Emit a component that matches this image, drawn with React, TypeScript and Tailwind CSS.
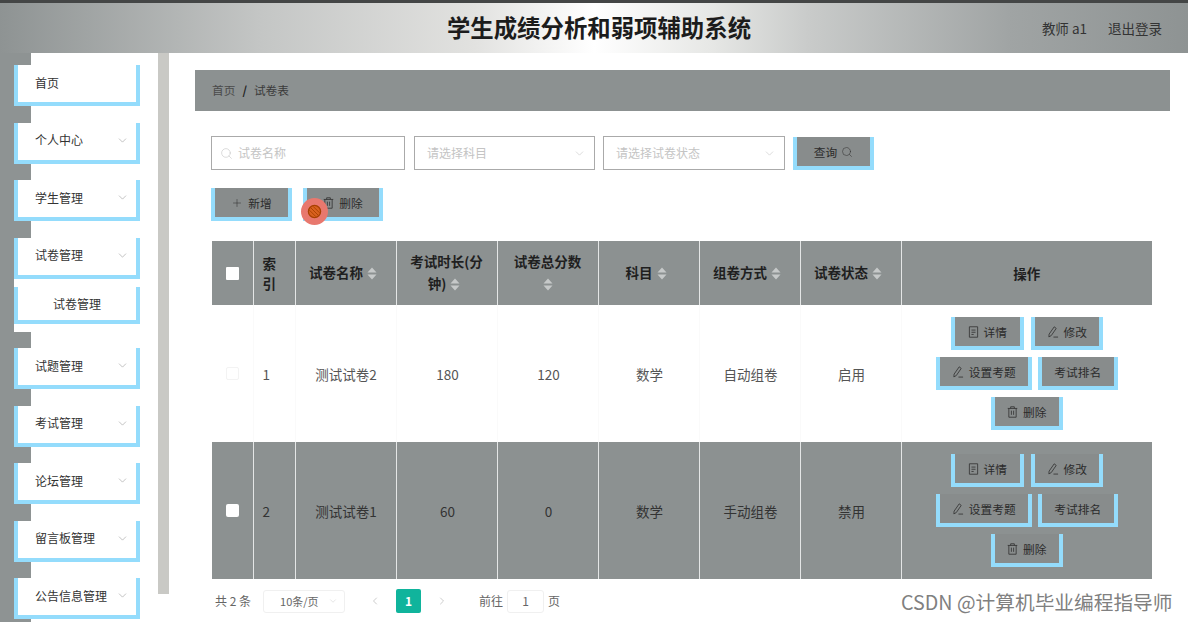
import React from 'react';
import { ChevronDown, ChevronLeft, ChevronRight, Plus, Search } from 'lucide-react';

const menu = ['首页', '个人中心', '学生管理', '试卷管理', '试题管理', '考试管理', '论坛管理', '留言板管理', '公告信息管理'];

const rows = [
  { id: 1, name: '测试试卷2', time: '180', score: '120', subject: '数学', mode: '自动组卷', status: '启用' },
  { id: 2, name: '测试试卷1', time: '60', score: '0', subject: '数学', mode: '手动组卷', status: '禁用' },
];

function SortIcon() {
  return (
    <svg viewBox="0 0 10 13" className="inline-block w-[10px] h-[13px] ml-[4px] mr-[5px] align-[-2px]">
      <path d="M5 0.5 L9.5 5.5 H0.5 Z M5 12.5 L0.5 7.5 H9.5 Z" fill="#c6c9c9" />
    </svg>
  );
}

function TrashIcon() {
  return (
    <svg viewBox="0 0 12 13" fill="none" stroke="#333" strokeWidth="0.9" className="w-[11px] h-[12px]">
      <path d="M0.8 2.6 H11.2 M4 2.6 V0.8 H8 V2.6 M2 2.6 V12.2 H10 V2.6 M4.8 5 V9.6 M7.2 5 V9.6" />
    </svg>
  );
}

function DocIcon() {
  return (
    <svg viewBox="0 0 12 13" fill="none" stroke="#333" strokeWidth="0.9" className="w-[11px] h-[12px]">
      <path d="M1.5 0.8 H10.5 V12.2 H1.5 Z M3.8 4.4 H8.2 M3.8 6.8 H8.2 M3.8 9.2 H6.2" />
    </svg>
  );
}

function PenIcon() {
  return (
    <svg viewBox="0 0 13 13" fill="none" stroke="#333" strokeWidth="0.9" className="w-[12px] h-[12px]">
      <path d="M7.8 0.9 L10 2.6 L4.6 10.4 L2 11.8 L2.3 8.8 Z M7 12 H12" />
    </svg>
  );
}

function BlueButton({ className, children }: { className: string; children: React.ReactNode }) {
  return (
    <button className={`h-[33px] border-x-4 border-b-4 border-[#94dcfc] bg-[#888c8c] flex items-center justify-center gap-[5px] text-[11.7px] text-[#2b2b2b] ${className}`}>
      {children}
    </button>
  );
}

function Actions() {
  return (
    <div className="flex flex-col items-center gap-[7px]">
      <div className="flex gap-[7px]">
        <BlueButton className="w-[73px]"><DocIcon />详情</BlueButton>
        <BlueButton className="w-[72px]"><PenIcon />修改</BlueButton>
      </div>
      <div className="flex gap-[6px]">
        <BlueButton className="w-[96px]"><PenIcon />设置考题</BlueButton>
        <BlueButton className="w-[80px]">考试排名</BlueButton>
      </div>
      <BlueButton className="w-[72px]"><TrashIcon />删除</BlueButton>
    </div>
  );
}

export default function App() {
  return (
    <div className="relative w-[1188px] h-[622px] overflow-hidden bg-white font-['Noto_Sans_CJK_SC','Liberation_Sans',sans-serif] text-[#333]">
      <div className="h-[3px] bg-[#444646]" />
      <header className="h-[50px] grid grid-cols-[1fr_auto_1fr] items-center pl-[36px] pr-[26px] bg-[linear-gradient(to_right,#8e9393_0%,#c4c6c5_22%,#e2e2e0_40%,#ffffff_50%,#e6e7e5_60%,#c9cbca_68%,#a0a4a4_85%,#8e9393_100%)]">
        <div />
        <h1 className="text-[23.4px] font-bold text-[#1c1c1c] whitespace-nowrap">学生成绩分析和弱项辅助系统</h1>
        <div className="flex justify-end gap-[21px] text-[13.5px] text-[#333]">
          <span>教师 a1</span>
          <span>退出登录</span>
        </div>
      </header>

      <div className="flex">
        <aside className="w-[158px] h-[569px] pl-[14px] pt-[12px] bg-[linear-gradient(to_right,#8e9393_31px,#ffffff_31px)] flex flex-col gap-[16.5px]">
          {menu.map((label, i) => (
            <React.Fragment key={label}>
              <div className="w-[126px] h-[41px] shrink-0 border-x-4 border-b-4 border-[#94dcfc] bg-white flex items-center justify-between pl-[17px] pr-[7px] pb-[2px] text-[12px] text-[#333]">
                <span>{label}</span>
                {i > 0 && <ChevronDown className="w-[13px] h-[13px] text-[#8f8f8f]" strokeWidth={1} />}
              </div>
              {i === 3 && (
                <div className="-mt-[16.5px] h-[53px] shrink-0 pt-[8px] bg-white">
                  <div className="w-[126px] h-[37px] border-x-4 border-b-4 border-[#94dcfc] bg-white flex items-center justify-center pt-[2px] text-[12px] text-[#333]">
                    试卷管理
                  </div>
                </div>
              )}
            </React.Fragment>
          ))}
        </aside>
        <div className="w-[11px] h-[541px] bg-[#c9c9c5]" />

        <main className="flex-1 pl-[26px] pr-[18px] pt-[17px]">
          <div className="h-[41px] bg-[#8c9191] flex items-center pl-[17px] pb-[2px] text-[11.7px] text-[#3a3a3a]">
            <span className="text-[#4a4a4a]">首页</span>
            <span className="mx-[7px] font-bold text-[#222]">/</span>
            <span>试卷表</span>
          </div>

          <div className="pl-[16px] pr-[18px]">
            <div className="flex mt-[25px] h-[34px] items-start">
              <div className="w-[194px] h-[34px] border border-[#aaaaaa] flex items-center pl-[8px] gap-[5px] text-[12px] text-[#c4c4c4]">
                <Search className="w-[13px] h-[13px] text-[#c4c4c4]" strokeWidth={1.1} />
                试卷名称
              </div>
              <div className="ml-[9px] w-[181px] h-[34px] border border-[#aaaaaa] flex items-center justify-between pl-[12px] pr-[8px] text-[12px] text-[#c4c4c4]">
                请选择科目
                <ChevronDown className="w-[13px] h-[13px]" strokeWidth={1.1} />
              </div>
              <div className="ml-[8px] w-[182px] h-[34px] border border-[#aaaaaa] flex items-center justify-between pl-[12px] pr-[8px] text-[12px] text-[#c4c4c4]">
                请选择试卷状态
                <ChevronDown className="w-[13px] h-[13px]" strokeWidth={1.1} />
              </div>
              <BlueButton className="ml-[8px] mt-[1px] w-[81px] !gap-[4px]">
                查询
                <Search className="w-[12px] h-[12px] text-[#333]" strokeWidth={1.1} />
              </BlueButton>
            </div>

            <div className="flex gap-[11px] mt-[18px]">
              <BlueButton className="w-[81px]">
                <Plus className="w-[12px] h-[12px]" strokeWidth={1} />
                新增
              </BlueButton>
              <div className="relative">
                <BlueButton className="w-[80px]"><TrashIcon />删除</BlueButton>
                <div className="absolute left-[-2px] top-[10px] w-[27px] h-[27px] rounded-full bg-[#e8786e] flex items-center justify-center">
                  <svg viewBox="0 0 16 16" fill="none" stroke="#a84000" strokeWidth="1.4" className="w-[15px] h-[15px]">
                    <circle cx="8" cy="8" r="6.5" fill="#d9611f" />
                    <path d="M3.6 3.6 L12.4 12.4 M6.6 2.6 L13.4 9.4 M2.6 6.6 L9.4 13.4" strokeWidth="1" />
                  </svg>
                </div>
              </div>
            </div>

            <table className="table-fixed border-collapse w-[940px] mt-[20px] ml-[1px]">
              <colgroup>
                <col className="w-[41px]" />
                <col className="w-[42px]" />
                <col className="w-[101px]" />
                <col className="w-[101px]" />
                <col className="w-[101px]" />
                <col className="w-[101px]" />
                <col className="w-[101px]" />
                <col className="w-[101px]" />
                <col className="w-[251px]" />
              </colgroup>
              <thead>
                <tr className="h-[64px] bg-[#8c9191] text-[13.5px] leading-[22px] font-bold text-[#1f1f1f] [&>th]:border-x [&>th]:border-[#e4e6e6] [&>th]:px-[9px] [&>th]:font-bold">
                  <th className="!border-l-0">
                    <div className="w-[13px] h-[13px] mx-auto bg-white rounded-[1px]" />
                  </th>
                  <th className="text-left !leading-[20px]">索引</th>
                  <th className="pb-[3px]">试卷名称<SortIcon /></th>
                  <th className="pb-[3px] pl-[10px]">考试时长(分钟)<SortIcon /></th>
                  <th className="pb-[3px]">
                    试卷总分数
                    <br />
                    <svg viewBox="0 0 10 13" className="inline-block w-[10px] h-[13px] align-[-2px]">
                      <path d="M5 0.5 L9.5 5.5 H0.5 Z M5 12.5 L0.5 7.5 H9.5 Z" fill="#c6c9c9" />
                    </svg>
                  </th>
                  <th className="pb-[3px]">科目<SortIcon /></th>
                  <th className="pb-[3px]">组卷方式<SortIcon /></th>
                  <th className="pb-[3px]">试卷状态<SortIcon /></th>
                  <th className="!border-r-0 pl-[11px]">操作</th>
                </tr>
              </thead>
              <tbody>
                {rows.map((r) => {
                  const odd = r.id === 1;
                  const line = odd ? 'border-[#fafafa]' : 'border-[#e4e6e6]';
                  return (
                    <tr key={r.id} className={`text-center text-[13.5px] ${odd ? 'bg-white text-[#555]' : 'bg-[#8c9191] text-[#333]'}`}>
                      <td className={`border-r ${line}`}>
                        <div className={`w-[13px] h-[13px] mx-auto rounded-[2px] ${odd ? 'border border-[#f3f3f3]' : 'bg-white'}`} />
                      </td>
                      <td className={`border-x text-left pl-[9px] pt-[2px] ${line}`}>{r.id}</td>
                      <td className={`border-x pl-[1px] pt-[2px] ${line}`}>{r.name}</td>
                      <td className={`border-x pl-[2px] pt-[2px] ${line}`}>{r.time}</td>
                      <td className={`border-x pl-[2px] pt-[2px] ${line}`}>{r.score}</td>
                      <td className={`border-x pl-[2px] pt-[2px] ${line}`}>{r.subject}</td>
                      <td className={`border-x pl-[2px] pt-[2px] ${line}`}>{r.mode}</td>
                      <td className={`border-x pl-[2px] pt-[2px] ${line}`}>{r.status}</td>
                      <td className={`border-l py-[12px] ${line}`}>
                        <Actions />
                      </td>
                    </tr>
                  );
                })}
              </tbody>
            </table>

            <div className="flex items-center h-[24px] mt-[10px] ml-[4px] text-[12px] text-[#666]">
              <span>共 2 条</span>
              <div className="ml-[12px] w-[82px] h-[23px] border border-[#f0f0f0] rounded-[3px] flex items-center justify-between pl-[16px] pr-[6px] text-[11px]">
                10条/页
                <ChevronDown className="w-[10px] h-[10px] text-[#ccc]" strokeWidth={1.2} />
              </div>
              <ChevronLeft className="ml-[24px] w-[12px] h-[12px] text-[#bbb]" strokeWidth={1.5} />
              <div className="ml-[15px] w-[25px] h-[24px] bg-[#10b49c] rounded-[2px] flex items-center justify-center font-bold text-white">1</div>
              <ChevronRight className="ml-[15px] w-[12px] h-[12px] text-[#bbb]" strokeWidth={1.5} />
              <span className="ml-[31px]">前往</span>
              <div className="ml-[4px] w-[37px] h-[23px] border border-[#f0f0f0] rounded-[3px] flex items-center justify-center">1</div>
              <span className="ml-[4px]">页</span>
            </div>
          </div>
        </main>
      </div>

      <div className="absolute left-[901px] top-[589px] text-[19.7px] leading-[26px] text-[#808080] whitespace-nowrap">
        CSDN @计算机毕业编程指导师
      </div>
    </div>
  );
}
